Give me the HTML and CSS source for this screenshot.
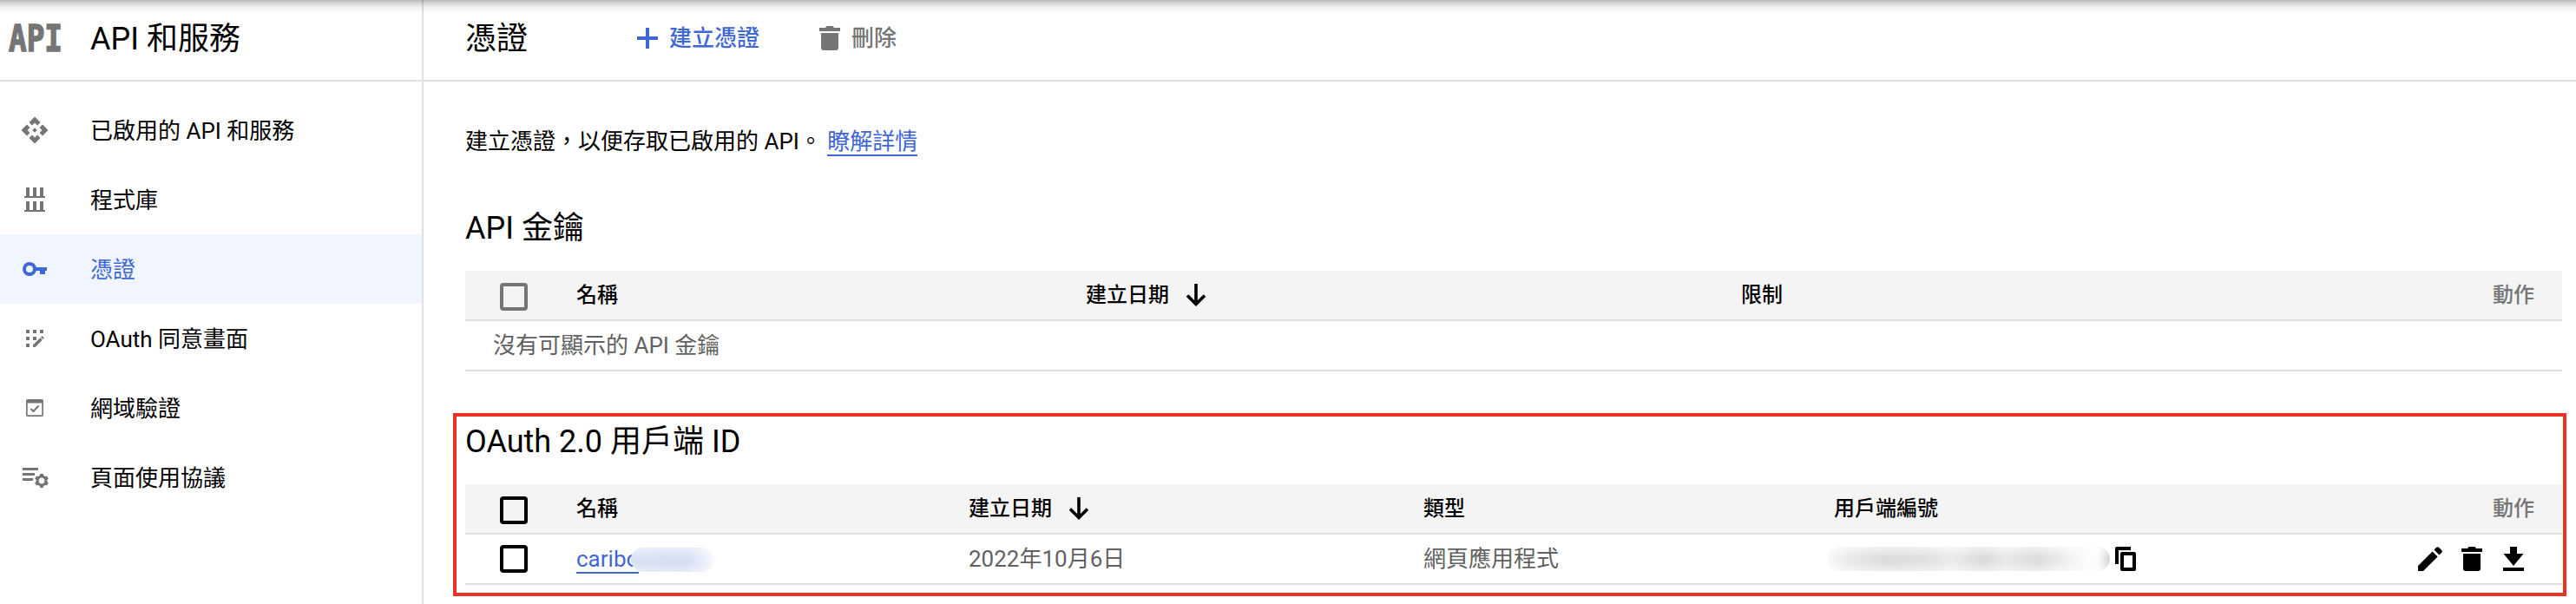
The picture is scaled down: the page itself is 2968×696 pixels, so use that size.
FILE: index.html
```html
<!DOCTYPE html>
<html lang="zh-Hant">
<head>
<meta charset="utf-8">
<title>憑證 – API 和服務</title>
<link rel="stylesheet" href="styles.css">
</head>
<body>
<div class="app">
  <aside class="sidebar">
    <header class="product">
      <svg class="logo" width="64" height="56" viewBox="0 0 64 56"><text x="1" y="42.500" textLength="62" lengthAdjust="spacingAndGlyphs">API</text></svg>
      <h1 class="title">API 和服務</h1>
    </header>
    <nav class="nav">
      <a class="nav-item">
        <svg class="icon" viewBox="0 0 36 36"><path transform="translate(1.1 1.1) scale(1.41)" d="M14 12l-2 2-2-2 2-2 2 2zm-2-6l2.12 2.12 2.5-2.5L12 1 7.38 5.62l2.5 2.5L12 6zm-6 6l2.12-2.12-2.5-2.5L1 12l4.62 4.62 2.5-2.5L6 12zm12 0l-2.12 2.12 2.5 2.5L23 12l-4.62-4.62-2.5 2.5L18 12zm-6 6l-2.12-2.12-2.5 2.5L12 23l4.62-4.62-2.5-2.5L12 18z"/></svg>
        <span>已啟用的 API 和服務</span>
      </a>
      <a class="nav-item">
        <svg class="icon" viewBox="0 0 36 36"><path d="M8 4h4v10h4V4h4v10h4V4h4v10h2v2H6v-2h2zM8 20h4v10h4V20h4v10h4V20h4v10h2v2H6v-2h2z"/></svg>
        <span>程式庫</span>
      </a>
      <a class="nav-item nav-item--active">
        <svg class="icon" viewBox="0 0 36 36"><path fill-rule="evenodd" d="M12 10a8 8 0 0 1 7.750 6H32v4h-2v4h-6v-4h-4.250A8 8 0 1 1 12 10zm0 4a4 4 0 1 0 0 8 4 4 0 0 0 0-8z"/></svg>
        <span>憑證</span>
      </a>
      <a class="nav-item">
        <svg class="icon" viewBox="0 0 36 36"><path d="M8 8h4v4H8zM16 8h4v4h-4zM24 8h4v4h-4zM8 16h4v4H8zM16 16h4v4h-4zM8 24h4v4H8zM16 25.500l8.300-8.300 2.500 2.500L18.500 28H16zM25 16.500l1-1q.500-.500 1 0l1.400 1.400q.500.500 0 1l-.900 1z"/></svg>
        <span>OAuth 同意畫面</span>
      </a>
      <a class="nav-item">
        <svg class="icon" viewBox="0 0 36 36"><path fill-rule="evenodd" d="M10 8h16a2 2 0 0 1 2 2v16a2 2 0 0 1-2 2H10a2 2 0 0 1-2-2V10a2 2 0 0 1 2-2zm-.300 4.500v13.800h16.600V12.500z"/><path class="line" d="M13.500 19l3 3 6-6.500"/></svg>
        <span>網域驗證</span>
      </a>
      <a class="nav-item">
        <svg class="icon" viewBox="0 0 36 36"><path d="M4 7h18v3H4zM4 13h14v3H4zM4 19h12v3H4z"/><g transform="translate(26 22)"><circle class="ring" r="4.900"/><path id="tooth" d="M-1.800-8h3.600l.700 3.500h-5zM-1.800 8h3.600l.700-3.500h-5z"/><use href="#tooth" transform="rotate(60)"/><use href="#tooth" transform="rotate(120)"/></g></svg>
        <span>頁面使用協議</span>
      </a>
    </nav>
  </aside>

  <main class="main">
    <header class="toolbar">
      <h2 class="title">憑證</h2>
      <button class="action action--create">
        <svg width="24" height="24" viewBox="0 0 24 24"><path d="M10 0h4v10h10v4H14v10h-4V14H0v-4h10z"/></svg>
        <span>建立憑證</span>
      </button>
      <button class="action action--delete">
        <svg width="24" height="28" viewBox="0 0 24 28"><path d="M0 2h7l1.500-2h7L17 2h7v4H0zM2 8h20v17a3 3 0 0 1-3 3H5a3 3 0 0 1-3-3z"/></svg>
        <span>刪除</span>
      </button>
    </header>

    <div class="content">
      <p class="intro">建立憑證，以便存取已啟用的 API。 <a class="link">瞭解詳情</a></p>

      <section class="keys">
        <h3 class="title">API 金鑰</h3>
        <div class="row row--head keys-grid">
          <span class="check check--disabled"></span>
          <span>名稱</span>
          <span class="sorted">建立日期 <svg class="arrow" width="24" height="26" viewBox="0 0 24 26"><path d="M12 0v24M2 13.500l10 10 10-10"/></svg></span>
          <span>限制</span>
          <span class="ops-label">動作</span>
        </div>
        <div class="row row--empty">沒有可顯示的 API 金鑰</div>
      </section>

      <section class="clients">
        <h3 class="title">OAuth 2.0 用戶端 ID</h3>
        <div class="row row--head clients-grid">
          <span class="check"></span>
          <span>名稱</span>
          <span class="sorted">建立日期 <svg class="arrow" width="24" height="26" viewBox="0 0 24 26"><path d="M12 0v24M2 13.500l10 10 10-10"/></svg></span>
          <span>類型</span>
          <span>用戶端編號</span>
          <span class="ops-label">動作</span>
        </div>
        <div class="row clients-grid">
          <span class="check"></span>
          <span class="name"><a class="link">caribo</a><i class="smudge smudge--name"></i></span>
          <span>2022年10月6日</span>
          <span>網頁應用程式</span>
          <span class="client-id">
            <i class="smudge smudge--id"></i>
            <svg width="24" height="28" viewBox="0 0 24 28"><path fill-rule="evenodd" d="M2 0h16v4H4v16H0V2a2 2 0 0 1 2-2zM8 6h14a2 2 0 0 1 2 2v18a2 2 0 0 1-2 2H8a2 2 0 0 1-2-2V8a2 2 0 0 1 2-2zm2 4v14h10V10z"/></svg>
          </span>
          <span class="ops">
            <svg width="28" height="28" viewBox="0 0 28 28"><path d="M0 22L16.600 5.400l6 6L6 28H0zM18.400 3.600l2.600-2.600q1.600-1.600 3.200 0l2.800 2.800q1.600 1.600 0 3.200l-2.600 2.600z"/></svg>
            <svg width="24" height="28" viewBox="0 0 24 28"><path d="M0 2h7l1.500-2h7L17 2h7v4H0zM2 8h20v17a3 3 0 0 1-3 3H5a3 3 0 0 1-3-3z"/></svg>
            <svg width="24" height="28" viewBox="0 0 24 28"><path d="M8 0h8v8h7.500L12 22 .500 8H8zM0 24h24v4H0z"/></svg>
          </span>
        </div>
      </section>
    </div>
  </main>
  <div class="top-shadow"></div>
</div>
</body>
</html>
```
FILE: styles.css
```css
* { box-sizing: border-box; }
body {
  margin: 0;
  background: #fff;
  color: #000;
  font: 26px/40px Roboto, "Noto Sans CJK TC", sans-serif;
  white-space: nowrap;
}
svg { display: block; flex: none; fill: currentColor; }
.app { position: relative; display: flex; height: 696px; overflow: hidden; }
.top-shadow {
  position: absolute;
  inset: 0 0 auto;
  height: 16px;
  background: linear-gradient(rgba(0,0,0,.28), rgba(0,0,0,.14) 25%, rgba(0,0,0,.04) 60%, transparent);
}
.title { margin: 0; padding-top: 2px; font-size: 36px; font-weight: 400; line-height: 50px; }

.sidebar { flex: none; width: 488px; border-right: 2px solid #e0e0e0; }
.product {
  display: flex;
  align-items: center;
  gap: 31px;
  height: 94px;
  padding: 0 0 4px 9px;
  border-bottom: 2px solid #e0e0e0;
}
.logo { overflow: visible; color: #757575; font: bold 42px/1 "DejaVu Sans Mono", monospace; }
.logo text { stroke: currentColor; stroke-width: 1.500; }
.nav { padding-top: 16px; }
.nav-item { display: flex; align-items: center; gap: 46px; height: 80px; padding-left: 22px; }
.nav-item span { padding-top: 1px; }
.nav-item--active { background: #f0f5ff; color: #3f67d6; }
.icon { width: 36px; height: 36px; color: #757575; }
.nav-item--active .icon { color: #3f67d6; }
.line { fill: none; stroke: currentColor; stroke-width: 2; }
.ring { fill: none; stroke: currentColor; stroke-width: 3; }

.main { flex: 1; }
.toolbar {
  display: flex;
  align-items: center;
  height: 94px;
  padding: 0 0 4px 48px;
  border-bottom: 2px solid #e0e0e0;
}
.action {
  display: flex;
  align-items: center;
  gap: 13px;
  padding: 0;
  border: 0;
  background: none;
  font: inherit;
  font-weight: 500;
}
.action--create { margin-left: 126px; color: #3f67d6; }
.action--delete { margin-left: 69px; color: #757575; }

.content { padding: 49px 16px 0 48px; }
.intro { margin: 0; }
.link { color: #3f67d6; border-bottom: 2px solid #3f67d6; }
.keys { padding-top: 53px; }
.keys .title { margin-bottom: 24px; }
.row {
  height: 58px;
  align-items: center;
  border-bottom: 2px solid #e0e0e0;
  color: #616161;
}
.row--head { background: #f4f4f4; color: #000; font-size: 24px; font-weight: 500; }
.row--empty { padding-left: 32px; line-height: 56px; }
.keys-grid { display: grid; grid-template-columns: 128px 587px 755px 1fr 80px; }
.clients-grid { display: grid; grid-template-columns: 128px 452px 524px 473px 1fr 168px; }
.check { width: 32px; height: 32px; margin-left: 40px; border: 4px solid #000; border-radius: 4px; }
.row--head .check { margin-top: 4px; }
.check--disabled { border-color: #757575; }
.sorted { display: flex; align-items: center; gap: 19px; }
.arrow path { fill: none; stroke: currentColor; stroke-width: 3.600; }
.ops-label { padding-right: 32px; text-align: right; color: #757575; }

.clients {
  margin: 48px -5px 0 -14px;
  height: 211px;
  padding: 2px 1px 0 10px;
  border: 4px solid #eb3325;
}
.clients .title { margin-bottom: 24px; }
.name { display: flex; color: #3f67d6; }
.name .link { line-height: 30px; padding-top: 1px; }
.smudge { display: block; flex: none; height: 28px; border-radius: 14px; }
.smudge--name {
  width: 96px;
  margin: 3px 0 0 -9px;
  background:
    linear-gradient(rgba(255,255,255,.45), transparent 45%, transparent 65%, rgba(255,255,255,.4)),
    linear-gradient(90deg, #dae2f5, #d5def3 65%, #e5eaf8 83%, #fafbfe);
  z-index: 1;
}
.client-id { display: flex; align-items: center; gap: 6px; margin-left: -7px; color: #000; }
.smudge--id {
  width: 325px;
  background:
    linear-gradient(rgba(255,255,255,.6), transparent 45%, transparent 60%, rgba(255,255,255,.5)),
    linear-gradient(90deg, #f9f9f9, #ebebeb 7%, #dcdcdc 20%, #e0e0e0 34%, #ececec 44%, #dadada 55%, #e9e9e9 63%, #dcdcdc 74%, #f2f2f2 86%, #fdfdfd 93%, #fafafa 96%, #d4d4d4);
}
.ops { display: flex; justify-content: flex-end; align-items: center; padding-right: 44px; color: #000; }
.ops svg:nth-child(2) { margin: 0 24px 0 22px; }
```
